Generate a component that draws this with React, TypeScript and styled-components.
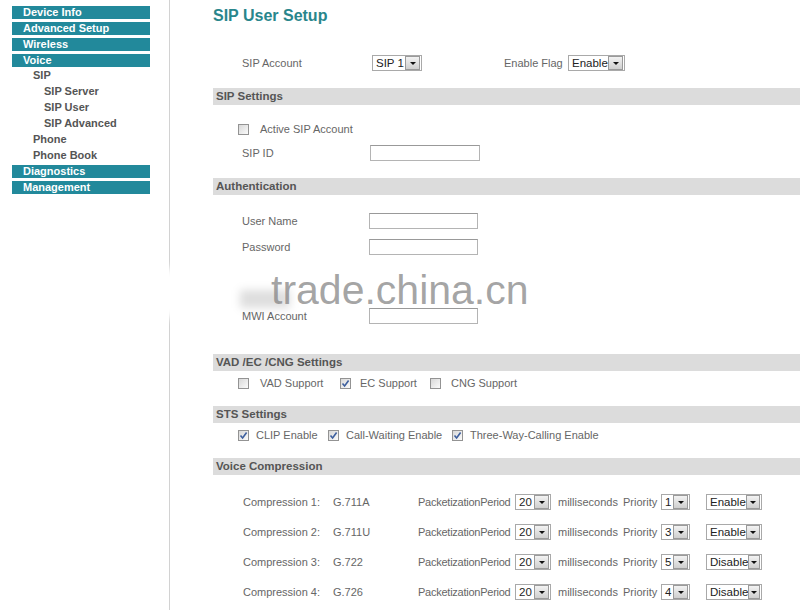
import React from 'react'
import styled, { createGlobalStyle } from 'styled-components'

const Global = createGlobalStyle`
	body {
		margin: 0;
		background: #fff;
		font-family: "Liberation Sans", Arial, sans-serif;
		font-size: 11px;
		color: #666;
	}
`

const Page = styled.div`
	position: relative;
	display: flex;
	width: 800px;
	height: 610px;
	overflow: hidden;
`

const Sidebar = styled.nav`
	width: 157px;
	flex-shrink: 0;
	padding: 6px 0 0 12px;
	border-right: 1px solid #d2d2d2;
	display: flex;
	flex-direction: column;
`

const NavBar = styled.div`
	width: 138px;
	height: 13px;
	margin-bottom: 3px;
	background: #22899b;
	color: #fff;
	font-weight: 700;
	font-size: 11px;
	line-height: 13px;
	padding-left: 11px;
	box-sizing: border-box;
`

const SubList = styled.div`
	margin: -3px 0 2px;
`

const SubItem = styled.div<{ level: number }>`
	height: 16px;
	line-height: 16px;
	padding-left: ${p => p.level === 1 ? 21 : 32}px;
	font-weight: 700;
	font-size: 11px;
	color: #555;
`

const Main = styled.main`
	flex: 1;
	padding-left: 43px;
	display: flex;
	flex-direction: column;
`

const Title = styled.h1`
	margin: 0;
	height: 51px;
	padding-top: 6px;
	box-sizing: border-box;
	line-height: 20px;
	font-size: 16px;
	font-weight: 700;
	color: #29868c;
`

const Band = styled.div<{ top: number }>`
	margin-top: ${p => p.top}px;
	height: 17px;
	line-height: 17px;
	padding-left: 3px;
	background: #dcdcdc;
	font-weight: 700;
	font-size: 11.5px;
	color: #555;
`

const Row = styled.div<{ h: number; top?: number; indent?: number }>`
	display: flex;
	align-items: center;
	height: ${p => p.h}px;
	margin-top: ${p => p.top ?? 0}px;
	padding-left: ${p => p.indent ?? 29}px;
`

const Label = styled.span<{ w?: number; ml?: number; tight?: boolean }>`
	width: ${p => (p.w ? `${p.w}px` : 'auto')};
	margin-left: ${p => p.ml ?? 0}px;
	flex-shrink: 0;
	white-space: nowrap;
	color: #666;
	letter-spacing: ${p => (p.tight ? '-0.25px' : 'normal')};
`

const SelectBox = styled.div<{ w: number; ml?: number }>`
	width: ${p => p.w}px;
	height: 16px;
	margin-left: ${p => p.ml ?? 0}px;
	flex-shrink: 0;
	box-sizing: border-box;
	border: 1px solid #a9a9a9;
	background: #fff;
	display: flex;
	align-items: center;
	justify-content: space-between;
	padding-left: 3px;
	font-size: 11.5px;
	color: #222;
`

const Arrow = styled.span`
	width: 13px;
	height: 12px;
	margin-right: 1px;
	border: 1px solid #9a9a9a;
	background: linear-gradient(#f2f2f2, #cfcfcf);
	display: flex;
	align-items: center;
	justify-content: center;
	&::after {
		content: '';
		border-left: 3px solid transparent;
		border-right: 3px solid transparent;
		border-top: 3px solid #111;
	}
`

const TextInput = styled.div<{ w: number }>`
	width: ${p => p.w}px;
	height: 16px;
	box-sizing: border-box;
	border: 1px solid #b4b4b4;
	border-top-color: #999;
	background: #fff;
`

const Box = styled.span<{ gap: number }>`
	width: 11px;
	height: 11px;
	margin-right: ${p => p.gap}px;
	flex-shrink: 0;
	box-sizing: border-box;
	border: 1px solid #939393;
	background: linear-gradient(135deg, #d8d8d8, #fbfbfb);
	display: inline-flex;
	align-items: center;
	justify-content: center;
`

const Watermark = styled.div`
	position: absolute;
	left: 271px;
	top: 271px;
	font-family: "Liberation Sans", Arial, sans-serif;
	font-size: 41px;
	line-height: 38px;
	color: rgba(130, 130, 130, 0.72);
	pointer-events: none;
`

const Smudge = styled.div<{ x: number; y: number; w: number; h: number; c: string }>`
	position: absolute;
	left: ${p => p.x}px;
	top: ${p => p.y}px;
	width: ${p => p.w}px;
	height: ${p => p.h}px;
	background: ${p => p.c};
	filter: blur(4px);
	pointer-events: none;
`

const Select = ({ value, w, ml }: { value: string; w: number; ml?: number }) => (
	<SelectBox w={w} ml={ml}>
		<span>{value}</span>
		<Arrow />
	</SelectBox>
)

// checkbox + its label, label width fixes where the next box starts
const Check = ({ on, gap, w, children }: { on?: boolean; gap: number; w?: number; children: string }) => (
	<>
		<Box gap={gap}>
			{on && (
				<svg width="9" height="9" viewBox="0 0 9 9">
					<path d="M1.5 4.5 L3.6 7 L7.6 1.5" fill="none" stroke="#3d5f9e" strokeWidth="1.6" />
				</svg>
			)}
		</Box>
		<Label w={w}>{children}</Label>
	</>
)

const codecs = [
	{ n: 1, codec: 'G.711A', prio: '1', flag: 'Enable' },
	{ n: 2, codec: 'G.711U', prio: '3', flag: 'Enable' },
	{ n: 3, codec: 'G.722', prio: '5', flag: 'Disable' },
	{ n: 4, codec: 'G.726', prio: '4', flag: 'Disable' },
]

export default function App() {
	return (
		<Page>
			<Global />
			<Sidebar>
				<NavBar>Device Info</NavBar>
				<NavBar>Advanced Setup</NavBar>
				<NavBar>Wireless</NavBar>
				<NavBar>Voice</NavBar>
				<SubList>
					<SubItem level={1}>SIP</SubItem>
					<SubItem level={2}>SIP Server</SubItem>
					<SubItem level={2}>SIP User</SubItem>
					<SubItem level={2}>SIP Advanced</SubItem>
					<SubItem level={1}>Phone</SubItem>
					<SubItem level={1}>Phone Book</SubItem>
				</SubList>
				<NavBar>Diagnostics</NavBar>
				<NavBar>Management</NavBar>
			</Sidebar>
			<Main>
				<Title>SIP User Setup</Title>
				<Row h={24}>
					<Label w={130}>SIP Account</Label>
					<Select value="SIP 1" w={50} />
					<Label ml={82} w={64}>Enable Flag</Label>
					<Select value="Enable" w={57} />
				</Row>

				<Band top={13}>SIP Settings</Band>
				<Row h={24} top={12} indent={25}>
					<Check gap={11}>Active SIP Account</Check>
				</Row>
				<Row h={24}>
					<Label w={128}>SIP ID</Label>
					<TextInput w={110} />
				</Row>

				<Band top={13}>Authentication</Band>
				<Row h={26} top={13}>
					<Label w={127}>User Name</Label>
					<TextInput w={109} />
				</Row>
				<Row h={26}>
					<Label w={127}>Password</Label>
					<TextInput w={109} />
				</Row>
				<Row h={26} top={43}>
					<Label w={127}>MWI Account</Label>
					<TextInput w={109} />
				</Row>

				<Band top={25}>VAD /EC /CNG Settings</Band>
				<Row h={24} indent={25}>
					<Check gap={11} w={80}>VAD Support</Check>
					<Check on gap={9} w={70}>EC Support</Check>
					<Check gap={10}>CNG Support</Check>
				</Row>

				<Band top={11}>STS Settings</Band>
				<Row h={24} indent={25}>
					<Check on gap={7} w={72}>CLIP Enable</Check>
					<Check on gap={7} w={106}>Call-Waiting Enable</Check>
					<Check on gap={7}>Three-Way-Calling Enable</Check>
				</Row>

				<Band top={11}>Voice Compression</Band>
				{codecs.map((c, i) => (
					<Row key={c.n} h={30} top={i === 0 ? 12 : 0} indent={30}>
						<Label w={90}>Compression {c.n}:</Label>
						<Label w={85}>{c.codec}</Label>
						<Label w={97} tight>PacketizationPeriod</Label>
						<Select value="20" w={36} />
						<Label w={65} ml={7}>milliseconds</Label>
						<Label w={38}>Priority</Label>
						<Select value={c.prio} w={29} />
						<Select value={c.flag} w={56} ml={16} />
					</Row>
				))}
			</Main>
			<Smudge x={160} y={268} w={24} h={50} c="#fff" />
			<Smudge x={240} y={290} w={50} h={18} c="rgba(0,0,0,0.13)" />
			<Watermark>trade.china.cn</Watermark>
		</Page>
	)
}
